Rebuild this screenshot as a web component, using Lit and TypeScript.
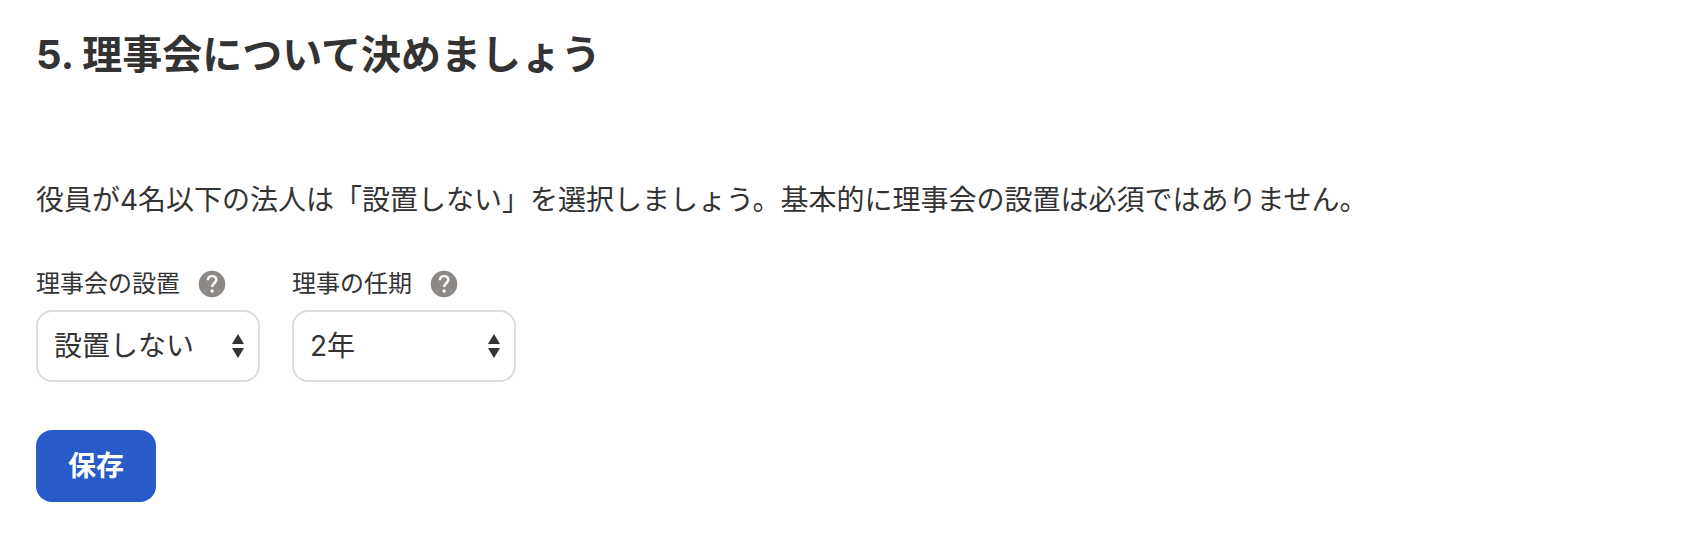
import { LitElement, html, css } from "lit";
import { customElement } from "lit/decorators.js";

@customElement("help-button")
class HelpButton extends LitElement {
  static properties = { topic: { type: String } };
  declare topic: string;

  static styles = css`
    :host {
      display: inline-flex;
    }
    .help {
      display: block;
      padding: 0;
      border: 0;
      background: none;
      color: #8d8986;
      cursor: pointer;
    }
    .icon {
      display: block;
      width: 32px;
      height: 32px;
    }
  `;

  render() {
    return html`
      <button class="help" type="button" aria-label=${`${this.topic}のヘルプ`}>
        <svg class="icon" viewBox="0 0 24 24" fill="currentColor" aria-hidden="true">
          <path
            d="M12 2C6.48 2 2 6.48 2 12s4.48 10 10 10 10-4.48 10-10S17.52 2 12 2z"
          />
          <path
            d="M8.9 9.2C9 7.3 10.3 6.1 12.1 6.1c1.8 0 3.1 1.1 3.1 2.8 0 2.3-3.1 2.6-3.1 5.3"
            fill="none"
            stroke="#fff"
            stroke-width="1.8"
          />
          <circle cx="12.1" cy="17.3" r="1.3" fill="#fff" />
        </svg>
      </button>
    `;
  }
}

@customElement("app-root")
class AppRoot extends LitElement {
  static styles = css`
    :host {
      display: block;
      padding: 24px 36px 36px;
      background: #fff;
      color: #333;
      font-family: Inter, "Noto Sans CJK JP", sans-serif;
      font-size: 28px;
      line-height: 40px;
    }
    .title {
      margin: 0 0 94px;
      font-size: 40px;
      font-weight: 700;
      line-height: 62px;
    }
    .lead {
      margin: 0 0 48px;
    }
    .form {
      display: flex;
      flex-direction: column;
      align-items: flex-start;
      gap: 48px;
    }
    .fields {
      display: flex;
      flex-wrap: wrap;
      gap: 32px;
    }
    .field {
      display: flex;
      flex-direction: column;
      gap: 10px;
    }
    .caption {
      display: flex;
      align-items: center;
      gap: 16px;
      height: 32px;
      font-size: 24px;
      line-height: 32px;
    }
    .picker {
      display: grid;
      align-items: center;
      width: 224px;
    }
    .select,
    .arrows {
      grid-area: 1 / 1;
    }
    .select {
      box-sizing: border-box;
      appearance: none;
      width: 100%;
      height: 72px;
      padding: 0 48px 0 16px;
      border: 2px solid #dcdcdc;
      border-radius: 16px;
      background: #fff;
      color: inherit;
      font: inherit;
    }
    .arrows {
      justify-self: end;
      width: 12px;
      height: 24px;
      margin-right: 16px;
      fill: #333;
      pointer-events: none;
    }
    .save {
      height: 72px;
      padding: 0 32px;
      border: 0;
      border-radius: 16px;
      background: #285ac8;
      color: #fff;
      font: inherit;
      font-weight: 700;
      cursor: pointer;
    }
  `;

  private field(id: string, label: string, options: string[]) {
    return html`
      <div class="field">
        <div class="caption">
          <label for=${id}>${label}</label>
          <help-button .topic=${label}></help-button>
        </div>
        <div class="picker">
          <select class="select" id=${id}>
            ${options.map((option) => html`<option>${option}</option>`)}
          </select>
          <svg class="arrows" viewBox="0 0 12 24" aria-hidden="true">
            <path d="M6 0L12 10H0zM6 24L0 14H12z" />
          </svg>
        </div>
      </div>
    `;
  }

  render() {
    return html`
      <h1 class="title">5. 理事会について決めましょう</h1>
      <p class="lead">
        役員が4名以下の法人は「設置しない」を選択しましょう。基本的に理事会の設置は必須ではありません。
      </p>
      <form class="form" @submit=${(event: Event) => event.preventDefault()}>
        <div class="fields">
          ${this.field("board", "理事会の設置", ["設置しない", "設置する"])}
          ${this.field("term", "理事の任期", ["2年", "1年"])}
        </div>
        <button class="save" type="submit">保存</button>
      </form>
    `;
  }
}
